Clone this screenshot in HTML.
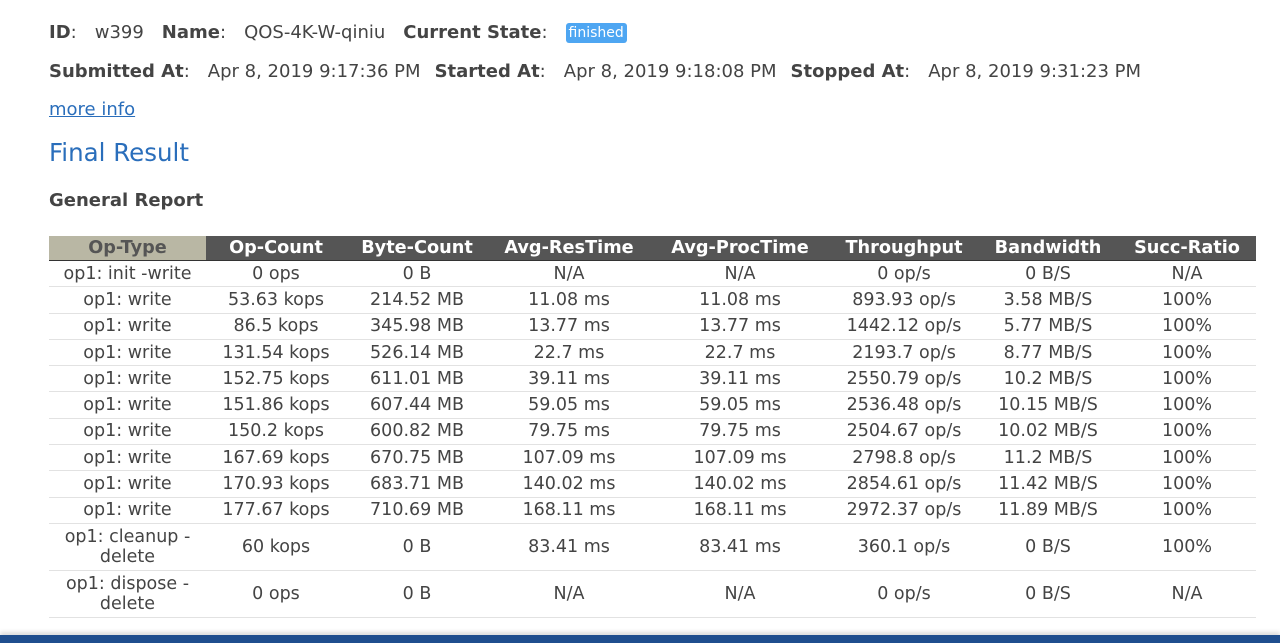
<!DOCTYPE html>
<html><head><meta charset="utf-8"><style>
body{margin:0;background:#fff;font-family:"DejaVu Sans","Liberation Sans",sans-serif;color:#444;width:1280px;height:643px;overflow:hidden;position:relative}
.line{position:absolute;left:49px;font-size:18px;white-space:nowrap}
.line b{color:#444}
.v{margin-left:18px;margin-right:14px}
.l1 .v{margin-right:18px}
.badge{display:inline-block;background:#4ea6f2;color:#fff;font-size:14px;padding:2px 3px;border-radius:3px;position:relative;top:-1px}
a{color:#2a6ebb}
table{position:absolute;left:49px;top:236px;border-collapse:collapse;font-size:17.5px;color:#444}
th{background:#555;color:#fff;font-size:17.7px;height:24px;padding:0;border-bottom:1px solid #333;white-space:nowrap}
th.f{background:#b9b7a4;color:#555}
td{text-align:center;height:25.3px;padding:0;border-bottom:1px solid #e2e2e2;line-height:20px;white-space:nowrap}
tr.t td{height:45.8px}
.bar{position:absolute;left:0;top:635px;width:1280px;height:8px;background:#1f4e8e;box-shadow:0 -3px 4px #ddd}
</style></head><body>
<div class="line l1" style="top:22px"><b>ID</b>:<span class="v">w399</span><b>Name</b>:<span class="v">QOS-4K-W-qiniu</span><b>Current State</b>:<span class="v"><span class="badge">finished</span></span></div>
<div class="line" style="top:61px"><b>Submitted At</b>:<span class="v">Apr 8, 2019 9:17:36 PM</span><b>Started At</b>:<span class="v">Apr 8, 2019 9:18:08 PM</span><b>Stopped At</b>:<span class="v">Apr 8, 2019 9:31:23 PM</span></div>
<div class="line" style="top:99px"><a href="#">more info</a></div>
<div class="line" style="top:138px;font-size:24.5px;color:#2a6ebb">Final Result</div>
<div class="line" style="top:190px;font-weight:bold">General Report</div>
<table>
<colgroup><col style="width:157px"><col style="width:140px"><col style="width:142px"><col style="width:162px"><col style="width:180px"><col style="width:148px"><col style="width:140px"><col style="width:138px"></colgroup>
<tr><th class="f">Op-Type</th><th>Op-Count</th><th>Byte-Count</th><th>Avg-ResTime</th><th>Avg-ProcTime</th><th>Throughput</th><th>Bandwidth</th><th>Succ-Ratio</th></tr>
<tr><td>op1: init -write</td><td>0 ops</td><td>0 B</td><td>N/A</td><td>N/A</td><td>0 op/s</td><td>0 B/S</td><td>N/A</td></tr>
<tr><td>op1: write</td><td>53.63 kops</td><td>214.52 MB</td><td>11.08 ms</td><td>11.08 ms</td><td>893.93 op/s</td><td>3.58 MB/S</td><td>100%</td></tr>
<tr><td>op1: write</td><td>86.5 kops</td><td>345.98 MB</td><td>13.77 ms</td><td>13.77 ms</td><td>1442.12 op/s</td><td>5.77 MB/S</td><td>100%</td></tr>
<tr><td>op1: write</td><td>131.54 kops</td><td>526.14 MB</td><td>22.7 ms</td><td>22.7 ms</td><td>2193.7 op/s</td><td>8.77 MB/S</td><td>100%</td></tr>
<tr><td>op1: write</td><td>152.75 kops</td><td>611.01 MB</td><td>39.11 ms</td><td>39.11 ms</td><td>2550.79 op/s</td><td>10.2 MB/S</td><td>100%</td></tr>
<tr><td>op1: write</td><td>151.86 kops</td><td>607.44 MB</td><td>59.05 ms</td><td>59.05 ms</td><td>2536.48 op/s</td><td>10.15 MB/S</td><td>100%</td></tr>
<tr><td>op1: write</td><td>150.2 kops</td><td>600.82 MB</td><td>79.75 ms</td><td>79.75 ms</td><td>2504.67 op/s</td><td>10.02 MB/S</td><td>100%</td></tr>
<tr><td>op1: write</td><td>167.69 kops</td><td>670.75 MB</td><td>107.09 ms</td><td>107.09 ms</td><td>2798.8 op/s</td><td>11.2 MB/S</td><td>100%</td></tr>
<tr><td>op1: write</td><td>170.93 kops</td><td>683.71 MB</td><td>140.02 ms</td><td>140.02 ms</td><td>2854.61 op/s</td><td>11.42 MB/S</td><td>100%</td></tr>
<tr><td>op1: write</td><td>177.67 kops</td><td>710.69 MB</td><td>168.11 ms</td><td>168.11 ms</td><td>2972.37 op/s</td><td>11.89 MB/S</td><td>100%</td></tr>
<tr class="t"><td>op1: cleanup -<br>delete</td><td>60 kops</td><td>0 B</td><td>83.41 ms</td><td>83.41 ms</td><td>360.1 op/s</td><td>0 B/S</td><td>100%</td></tr>
<tr class="t"><td>op1: dispose -<br>delete</td><td>0 ops</td><td>0 B</td><td>N/A</td><td>N/A</td><td>0 op/s</td><td>0 B/S</td><td>N/A</td></tr>
</table>
<div class="bar"></div>
</body></html>
